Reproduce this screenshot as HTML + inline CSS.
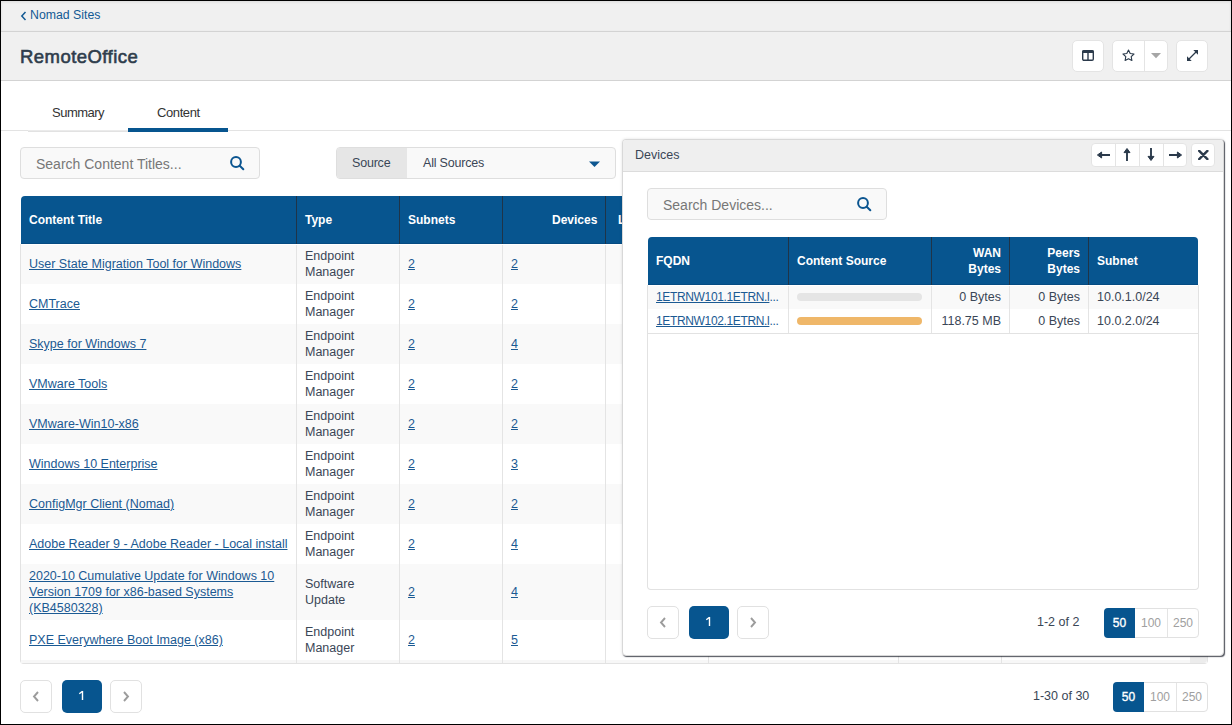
<!DOCTYPE html>
<html><head><meta charset="utf-8"><style>
*{box-sizing:border-box;margin:0;padding:0}
html,body{width:1232px;height:725px;overflow:hidden;background:#fff;font-family:"Liberation Sans",sans-serif;color:#3a4656}
.a{position:absolute}
.nw{white-space:nowrap}
#frame{position:absolute;left:0;top:0;width:1232px;height:725px;border:1px solid #000;z-index:50}
.lnk{color:#1b5a93;text-decoration:underline;text-underline-offset:1px}
.hb{position:absolute;background:#fff;border:1px solid #e4e4e4;border-radius:5px}
.sbox{position:absolute;background:#f9f9f9;border:1px solid #dedede;border-radius:4px}
.ph{position:absolute;font-size:14px;color:#777;white-space:nowrap}
.th{position:absolute;background:#07558f;color:#fff;font-weight:bold;font-size:12px;line-height:16px}
.vd{position:absolute;width:1px}
.cell{position:absolute;font-size:12.5px;line-height:16px;white-space:nowrap}
.pb{position:absolute;background:#fff;border:1px solid #e1e1e1;border-radius:5px}
.pa{position:absolute;background:#07558f;border-radius:5px;color:#fff;font-size:12px;text-align:center}
</style></head><body>
<div id="frame"></div>
<div class="a" style="left:1px;top:1px;width:1230px;height:31px;background:#f0f0f0;border-bottom:1px solid #d3d3d3;box-shadow:inset 0 1px 3px rgba(0,0,0,0.09)"></div>
<svg class="a" style="left:20px;top:10.5px" width="7" height="10" viewBox="0 0 7 10"><path d="M5.5 1 L1.8 5 L5.5 9" fill="none" stroke="#135a94" stroke-width="1.5"/></svg>
<div class="a nw" style="left:30px;top:8px;font-size:12.3px;color:#135a94">Nomad Sites</div>
<div class="a" style="left:1px;top:32px;width:1230px;height:49px;background:#f0f0f0;border-bottom:1px solid #d3d3d3"></div>
<div class="a nw" style="left:20px;top:46px;font-size:18.5px;font-weight:normal;-webkit-text-stroke:0.6px #2f3d4c;letter-spacing:0.45px;color:#2f3d4c">RemoteOffice</div>
<div class="hb" style="left:1072px;top:40px;width:32px;height:32px"></div>
<svg class="a" style="left:1082px;top:50px" width="12" height="11" viewBox="0 0 12 11"><rect x="0.7" y="0.7" width="10.6" height="9.6" rx="1.2" fill="none" stroke="#2b3a4b" stroke-width="1.4"/><rect x="0.3" y="0.3" width="11.4" height="2.7" rx="1" fill="#2b3a4b"/><line x1="6" y1="2" x2="6" y2="10" stroke="#2b3a4b" stroke-width="1.4"/></svg>
<div class="hb" style="left:1112px;top:40px;width:56px;height:32px"></div>
<div class="a" style="left:1144px;top:41px;width:1px;height:30px;background:#e4e4e4"></div>
<svg class="a" style="left:1121px;top:49px" width="15" height="13" viewBox="0 0 15 13"><path d="M7.5 1 L9.2 4.5 L13 5 L10.2 7.7 L10.9 11.5 L7.5 9.7 L4.1 11.5 L4.8 7.7 L2 5 L5.8 4.5 Z" fill="none" stroke="#2b3a4b" stroke-width="1.1" stroke-linejoin="round"/></svg>
<svg class="a" style="left:1151px;top:53px" width="10" height="6" viewBox="0 0 10 6"><path d="M0 0 L10 0 L5 5.2 Z" fill="#a6a6a6"/></svg>
<div class="hb" style="left:1176px;top:40px;width:32px;height:32px"></div>
<svg class="a" style="left:1186px;top:49px" width="13" height="13" viewBox="0 0 13 13"><line x1="3" y1="10" x2="10" y2="3" stroke="#2b3a4b" stroke-width="1.2"/><path d="M7.3 1 L12 1 L12 5.7 Z" fill="#2b3a4b"/><path d="M1 7.3 L1 12 L5.7 12 Z" fill="#2b3a4b"/></svg>
<div class="a" style="left:1px;top:130px;width:1230px;height:1px;background:#e3e3e3"></div>
<div class="a" style="left:28px;top:130px;width:100px;height:1px;background:#ebebeb"></div>
<div class="a" style="left:28px;top:131px;width:100px;height:1px;background:#e2e2e2"></div>
<div class="a" style="left:128px;top:128px;width:100px;height:4px;background:#07558f"></div>
<div class="a nw" style="left:52px;top:105px;font-size:13px;letter-spacing:-0.5px;color:#333">Summary</div>
<div class="a nw" style="left:157px;top:105px;font-size:13px;letter-spacing:-0.4px;color:#333">Content</div>
<div class="sbox" style="left:20px;top:147px;width:240px;height:32px"></div>
<div class="ph" style="left:36px;top:156px">Search Content Titles...</div>
<svg class="a" style="left:230px;top:156px" width="15" height="15" viewBox="0 0 15 15"><circle cx="6" cy="6" r="4.9" fill="none" stroke="#0b5590" stroke-width="2"/><line x1="9.7" y1="9.7" x2="13.3" y2="13.3" stroke="#0b5590" stroke-width="2" stroke-linecap="round"/></svg>
<div class="sbox" style="left:336px;top:147px;width:280px;height:32px"></div>
<div class="a" style="left:337px;top:148px;width:70px;height:30px;background:#e6e6e6;border-radius:3px 0 0 3px"></div>
<div class="a nw" style="left:352px;top:156px;font-size:12.5px;letter-spacing:-0.2px;color:#3a4656">Source</div>
<div class="a nw" style="left:423px;top:156px;font-size:12.5px;letter-spacing:-0.2px;color:#3a4656">All Sources</div>
<svg class="a" style="left:589px;top:161px" width="11" height="7" viewBox="0 0 11 7"><path d="M0 0.5 L11 0.5 L5.5 6 Z" fill="#0d5690"/></svg>
<div class="a" style="left:20px;top:244px;width:1188px;height:420px;border:1px solid #e2e2e2;border-top:0;border-radius:0 0 4px 4px;overflow:hidden">
<div class="a" style="left:0;top:1px;width:1186px;height:39px;background:#f9f9f9"></div>
<div class="a" style="left:0;top:40px;width:1186px;height:40px;background:#ffffff"></div>
<div class="a" style="left:0;top:80px;width:1186px;height:40px;background:#f9f9f9"></div>
<div class="a" style="left:0;top:120px;width:1186px;height:40px;background:#ffffff"></div>
<div class="a" style="left:0;top:160px;width:1186px;height:40px;background:#f9f9f9"></div>
<div class="a" style="left:0;top:200px;width:1186px;height:40px;background:#ffffff"></div>
<div class="a" style="left:0;top:240px;width:1186px;height:40px;background:#f9f9f9"></div>
<div class="a" style="left:0;top:280px;width:1186px;height:40px;background:#ffffff"></div>
<div class="a" style="left:0;top:320px;width:1186px;height:56px;background:#f9f9f9"></div>
<div class="a" style="left:0;top:376px;width:1186px;height:43px;background:#ffffff"></div>
</div>
<div class="a" style="left:21px;top:660px;width:1186px;height:3px;background:#f7f7f7"></div>
<div class="a" style="left:1190px;top:645px;width:17px;height:18px;background:#ececec;border-radius:0 0 4px 0"></div>
<div class="a" style="left:21px;top:196px;width:1186px;height:48px;background:#07558f;border-bottom:1px solid #054b82;border-radius:4px 4px 0 0"></div>
<div class="vd" style="left:296px;top:196px;height:48px;background:#1f3448"></div>
<div class="vd" style="left:296px;top:245px;height:418px;background:#e4e4e4"></div>
<div class="vd" style="left:399px;top:196px;height:48px;background:#1f3448"></div>
<div class="vd" style="left:399px;top:245px;height:418px;background:#e4e4e4"></div>
<div class="vd" style="left:502px;top:196px;height:48px;background:#1f3448"></div>
<div class="vd" style="left:502px;top:245px;height:418px;background:#e4e4e4"></div>
<div class="vd" style="left:605px;top:196px;height:48px;background:#1f3448"></div>
<div class="vd" style="left:605px;top:245px;height:418px;background:#e4e4e4"></div>
<div class="vd" style="left:708px;top:196px;height:48px;background:#1f3448"></div>
<div class="vd" style="left:708px;top:245px;height:418px;background:#e4e4e4"></div>
<div class="vd" style="left:898px;top:196px;height:48px;background:#1f3448"></div>
<div class="vd" style="left:898px;top:245px;height:418px;background:#e4e4e4"></div>
<div class="vd" style="left:1001px;top:196px;height:48px;background:#1f3448"></div>
<div class="vd" style="left:1001px;top:245px;height:418px;background:#e4e4e4"></div>
<div class="th nw" style="left:29px;top:212px;background:none">Content Title</div>
<div class="th nw" style="left:305px;top:212px;background:none">Type</div>
<div class="th nw" style="left:408px;top:212px;background:none">Subnets</div>
<div class="th nw" style="left:552px;top:212px;background:none">Devices</div>
<div class="th nw" style="left:618px;top:212px;background:none">L</div>
<div class="cell lnk" style="left:29px;top:256px">User State Migration Tool for Windows</div>
<div class="cell" style="left:305px;top:248px">Endpoint<br>Manager</div>
<div class="cell lnk" style="left:408px;top:256px">2</div>
<div class="cell lnk" style="left:511px;top:256px">2</div>
<div class="cell lnk" style="left:29px;top:296px">CMTrace</div>
<div class="cell" style="left:305px;top:288px">Endpoint<br>Manager</div>
<div class="cell lnk" style="left:408px;top:296px">2</div>
<div class="cell lnk" style="left:511px;top:296px">2</div>
<div class="cell lnk" style="left:29px;top:336px">Skype for Windows 7</div>
<div class="cell" style="left:305px;top:328px">Endpoint<br>Manager</div>
<div class="cell lnk" style="left:408px;top:336px">2</div>
<div class="cell lnk" style="left:511px;top:336px">4</div>
<div class="cell lnk" style="left:29px;top:376px">VMware Tools</div>
<div class="cell" style="left:305px;top:368px">Endpoint<br>Manager</div>
<div class="cell lnk" style="left:408px;top:376px">2</div>
<div class="cell lnk" style="left:511px;top:376px">2</div>
<div class="cell lnk" style="left:29px;top:416px">VMware-Win10-x86</div>
<div class="cell" style="left:305px;top:408px">Endpoint<br>Manager</div>
<div class="cell lnk" style="left:408px;top:416px">2</div>
<div class="cell lnk" style="left:511px;top:416px">2</div>
<div class="cell lnk" style="left:29px;top:456px">Windows 10 Enterprise</div>
<div class="cell" style="left:305px;top:448px">Endpoint<br>Manager</div>
<div class="cell lnk" style="left:408px;top:456px">2</div>
<div class="cell lnk" style="left:511px;top:456px">3</div>
<div class="cell lnk" style="left:29px;top:496px">ConfigMgr Client (Nomad)</div>
<div class="cell" style="left:305px;top:488px">Endpoint<br>Manager</div>
<div class="cell lnk" style="left:408px;top:496px">2</div>
<div class="cell lnk" style="left:511px;top:496px">2</div>
<div class="cell lnk" style="left:29px;top:536px">Adobe Reader 9 - Adobe Reader - Local install</div>
<div class="cell" style="left:305px;top:528px">Endpoint<br>Manager</div>
<div class="cell lnk" style="left:408px;top:536px">2</div>
<div class="cell lnk" style="left:511px;top:536px">4</div>
<div class="cell lnk" style="left:29px;top:568px">2020-10 Cumulative Update for Windows 10<br>Version 1709 for x86-based Systems<br>(KB4580328)</div>
<div class="cell" style="left:305px;top:576px">Software<br>Update</div>
<div class="cell lnk" style="left:408px;top:584px">2</div>
<div class="cell lnk" style="left:511px;top:584px">4</div>
<div class="cell lnk" style="left:29px;top:632px">PXE Everywhere Boot Image (x86)</div>
<div class="cell" style="left:305px;top:624px">Endpoint<br>Manager</div>
<div class="cell lnk" style="left:408px;top:632px">2</div>
<div class="cell lnk" style="left:511px;top:632px">5</div>
<div class="pb" style="left:20px;top:680px;width:32px;height:33px"></div>
<svg class="a" style="left:32px;top:691px" width="8" height="11" viewBox="0 0 8 11"><path d="M6 1 L2 5.5 L6 10" fill="none" stroke="#9c9c9c" stroke-width="1.9"/></svg>
<div class="pa" style="left:62px;top:680px;width:40px;height:33px"></div>
<svg class="a" style="left:78px;top:690px" width="6" height="11" viewBox="0 0 6 11"><path d="M4.5 1 L4.5 10 M4.5 1.3 L1.3 3.8" stroke="#fff" stroke-width="1.4" fill="none"/></svg>
<div class="pb" style="left:110px;top:680px;width:32px;height:33px"></div>
<svg class="a" style="left:122px;top:691px" width="8" height="11" viewBox="0 0 8 11"><path d="M2 1 L6 5.5 L2 10" fill="none" stroke="#9c9c9c" stroke-width="1.9"/></svg>
<div class="a nw" style="left:1033px;top:689px;font-size:12.5px;color:#3a4656">1-30 of 30</div>
<div class="pb" style="left:1113px;top:682px;width:95px;height:30px;border-radius:4px"></div>
<div class="a" style="left:1113px;top:682px;width:31px;height:30px;background:#07558f;border-radius:4px 0 0 4px;color:#fff;font-weight:normal;-webkit-text-stroke:0.35px #fff;font-size:12px;text-align:center;line-height:30px">50</div>
<div class="a" style="left:1176px;top:683px;width:1px;height:28px;background:#e4e4e4"></div>
<div class="a" style="left:1144px;top:682px;width:32px;height:30px;color:#a0a0a0;font-size:12px;text-align:center;line-height:30px">100</div>
<div class="a" style="left:1176px;top:682px;width:32px;height:30px;color:#a0a0a0;font-size:12px;text-align:center;line-height:30px">250</div>
<div class="a" style="left:622px;top:139px;width:602px;height:517px;background:#fff;border:1px solid #d8d8d8;border-radius:4px;box-shadow:1px 1px 1px rgba(30,34,46,0.75),0 0 3px rgba(0,0,0,0.12);z-index:5;overflow:hidden">
<div class="a" style="left:0;top:0;width:600px;height:32px;background:#efefef;border-bottom:1px solid #dcdcdc"></div>
<div class="a nw" style="left:12px;top:8px;font-size:12.5px;color:#3a4656">Devices</div>
<div class="hb" style="left:468px;top:3px;width:96px;height:24px;border-color:#e4e4e4;border-radius:4px"></div>
<div class="a" style="left:492px;top:4px;width:1px;height:22px;background:#e4e4e4"></div>
<div class="a" style="left:516px;top:4px;width:1px;height:22px;background:#e4e4e4"></div>
<div class="a" style="left:540px;top:4px;width:1px;height:22px;background:#e4e4e4"></div>
<div class="hb" style="left:568px;top:3px;width:24px;height:24px;border-color:#e4e4e4;border-radius:4px"></div>
<svg class="a" style="left:474px;top:9px" width="13" height="12" viewBox="0 0 13 12"><line x1="3" y1="6" x2="12.6" y2="6" stroke="#2b3a4b" stroke-width="1.9" stroke-linecap="round"/><path d="M0.4 6 L4.6 3 L4.6 9 Z" fill="#2b3a4b" stroke="#2b3a4b" stroke-width="1" stroke-linejoin="round"/></svg>
<svg class="a" style="left:498px;top:8px" width="12" height="13" viewBox="0 0 12 13"><line x1="6" y1="3" x2="6" y2="12.6" stroke="#2b3a4b" stroke-width="1.9" stroke-linecap="round"/><path d="M6 0.5 L3 4.6 L9 4.6 Z" fill="#2b3a4b" stroke="#2b3a4b" stroke-width="1" stroke-linejoin="round"/></svg>
<svg class="a" style="left:522px;top:8px" width="12" height="13" viewBox="0 0 12 13"><line x1="6" y1="0.4" x2="6" y2="10" stroke="#2b3a4b" stroke-width="1.9" stroke-linecap="round"/><path d="M6 12.5 L3 8.4 L9 8.4 Z" fill="#2b3a4b" stroke="#2b3a4b" stroke-width="1" stroke-linejoin="round"/></svg>
<svg class="a" style="left:545.5px;top:9px" width="13" height="12" viewBox="0 0 13 12"><line x1="0.4" y1="6" x2="10" y2="6" stroke="#2b3a4b" stroke-width="1.9" stroke-linecap="round"/><path d="M12.6 6 L8.4 3 L8.4 9 Z" fill="#2b3a4b" stroke="#2b3a4b" stroke-width="1" stroke-linejoin="round"/></svg>
<svg class="a" style="left:575px;top:9.5px" width="11" height="10" viewBox="0 0 11 10"><path d="M1.2 0.9 L9.4 9.1 M9.4 0.9 L1.2 9.1" stroke="#2b3a4b" stroke-width="2.4" stroke-linecap="round"/></svg>
<div class="sbox" style="left:24px;top:48px;width:240px;height:32px"></div>
<div class="ph" style="left:40px;top:57px">Search Devices...</div>
<svg class="a" style="left:234px;top:57px" width="15" height="15" viewBox="0 0 15 15"><circle cx="6" cy="6" r="4.9" fill="none" stroke="#0b5590" stroke-width="2"/><line x1="9.7" y1="9.7" x2="13.3" y2="13.3" stroke="#0b5590" stroke-width="2" stroke-linecap="round"/></svg>
<div class="a" style="left:24px;top:145px;width:552px;height:305px;border:1px solid #e2e2e2;border-top:0;border-radius:0 0 4px 4px;overflow:hidden">
<div class="a" style="left:0;top:1px;width:550px;height:23px;background:#f9f9f9"></div>
<div class="a" style="left:0;top:48px;width:550px;height:1px;background:#e2e2e2"></div>
</div>
<div class="a" style="left:25px;top:97px;width:550px;height:48px;background:#07558f;border-bottom:1px solid #054b82;border-radius:4px 4px 0 0"></div>
<div class="vd" style="left:165px;top:97px;height:48px;background:#1f3448"></div>
<div class="vd" style="left:165px;top:146px;height:47px;background:#e4e4e4"></div>
<div class="vd" style="left:308px;top:97px;height:48px;background:#1f3448"></div>
<div class="vd" style="left:308px;top:146px;height:47px;background:#e4e4e4"></div>
<div class="vd" style="left:386px;top:97px;height:48px;background:#1f3448"></div>
<div class="vd" style="left:386px;top:146px;height:47px;background:#e4e4e4"></div>
<div class="vd" style="left:465px;top:97px;height:48px;background:#1f3448"></div>
<div class="vd" style="left:465px;top:146px;height:47px;background:#e4e4e4"></div>
<div class="th nw" style="left:33px;top:113px;background:none">FQDN</div>
<div class="th nw" style="left:174px;top:113px;background:none">Content Source</div>
<div class="th nw" style="left:308px;top:105px;width:70px;text-align:right;background:none">WAN<br>Bytes</div>
<div class="th nw" style="left:386px;top:105px;width:71px;text-align:right;background:none">Peers<br>Bytes</div>
<div class="th nw" style="left:474px;top:113px;background:none">Subnet</div>
<div class="cell" style="left:33px;top:149px;letter-spacing:-0.35px;font-size:12px;color:#1b5a93"><span style="text-decoration:underline">1ETRNW101.1ETRN.l</span>...</div>
<div class="a" style="left:174px;top:153px;width:125px;height:8px;border-radius:4px;background:#e5e5e5"></div>
<div class="cell" style="left:308px;top:149px;width:70px;text-align:right">0 Bytes</div>
<div class="cell" style="left:386px;top:149px;width:71px;text-align:right">0 Bytes</div>
<div class="cell" style="left:474px;top:149px">10.0.1.0/24</div>
<div class="cell" style="left:33px;top:173px;letter-spacing:-0.35px;font-size:12px;color:#1b5a93"><span style="text-decoration:underline">1ETRNW102.1ETRN.l</span>...</div>
<div class="a" style="left:174px;top:177px;width:125px;height:8px;border-radius:4px;background:#efb769"></div>
<div class="cell" style="left:308px;top:173px;width:70px;text-align:right">118.75 MB</div>
<div class="cell" style="left:386px;top:173px;width:71px;text-align:right">0 Bytes</div>
<div class="cell" style="left:474px;top:173px">10.0.2.0/24</div>
<div class="pb" style="left:24px;top:466px;width:32px;height:33px"></div>
<svg class="a" style="left:36px;top:477px" width="8" height="11" viewBox="0 0 8 11"><path d="M6 1 L2 5.5 L6 10" fill="none" stroke="#9c9c9c" stroke-width="1.9"/></svg>
<div class="pa" style="left:66px;top:466px;width:40px;height:33px"></div>
<svg class="a" style="left:82px;top:476px" width="6" height="11" viewBox="0 0 6 11"><path d="M4.5 1 L4.5 10 M4.5 1.3 L1.3 3.8" stroke="#fff" stroke-width="1.4" fill="none"/></svg>
<div class="pb" style="left:114px;top:466px;width:32px;height:33px"></div>
<svg class="a" style="left:126px;top:477px" width="8" height="11" viewBox="0 0 8 11"><path d="M2 1 L6 5.5 L2 10" fill="none" stroke="#9c9c9c" stroke-width="1.9"/></svg>
<div class="a nw" style="left:414px;top:475px;font-size:12.5px;color:#3a4656">1-2 of 2</div>
<div class="pb" style="left:481px;top:468px;width:95px;height:30px;border-radius:4px"></div>
<div class="a" style="left:481px;top:468px;width:31px;height:30px;background:#07558f;border-radius:4px 0 0 4px;color:#fff;font-weight:normal;-webkit-text-stroke:0.35px #fff;font-size:12px;text-align:center;line-height:30px">50</div>
<div class="a" style="left:544px;top:469px;width:1px;height:28px;background:#e4e4e4"></div>
<div class="a" style="left:512px;top:468px;width:32px;height:30px;color:#a0a0a0;font-size:12px;text-align:center;line-height:30px">100</div>
<div class="a" style="left:544px;top:468px;width:32px;height:30px;color:#a0a0a0;font-size:12px;text-align:center;line-height:30px">250</div>
</div>
</body></html>
